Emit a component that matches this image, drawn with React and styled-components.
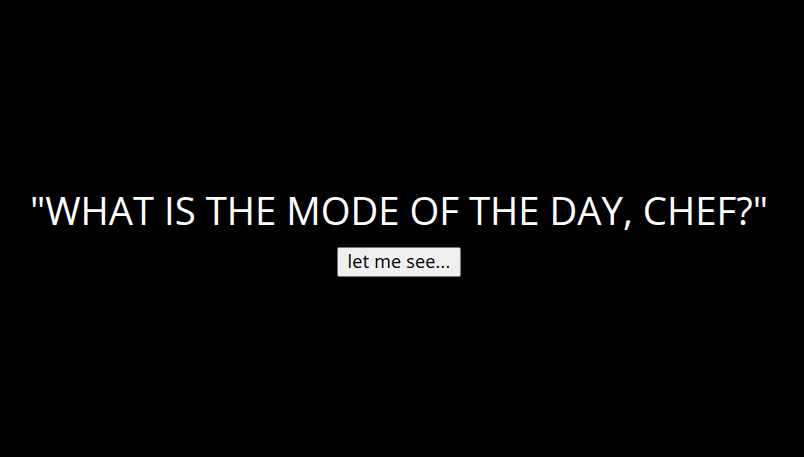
import React from "react";
import styled, { createGlobalStyle } from "styled-components";

const GlobalStyle = createGlobalStyle`
  html, body {
    margin: 0;
    padding: 0;
    background: #000;
  }
`;

const Page = styled.div`
  height: 100vh;
  display: flex;
  flex-direction: column;
  align-items: center;
  justify-content: center;
  padding: 4px 6px 0 0;
  box-sizing: border-box;
  background-color: #000;
  font-family: "Open Sans", "Noto Sans", sans-serif;
`;

const Title = styled.h1`
  margin: 0 0 12px;
  color: #fff;
  font-size: 38.3px;
  font-weight: 400;
  line-height: 50px;
  text-align: center;
`;

const SeeButton = styled.button`
  box-sizing: border-box;
  height: 30px;
  font-family: "Open Sans", "Noto Sans", sans-serif;
  font-size: 18px;
  line-height: 24px;
  letter-spacing: 0.2px;
  color: #000;
  background-color: #efefef;
  border: 1px solid #767676;
  border-radius: 2px;
  padding: 1px 10px 2px;
  cursor: pointer;
`;

const App = () => {
  return (
    <>
      <GlobalStyle />
      <Page>
        <Title>"WHAT IS THE MODE OF THE DAY, CHEF?"</Title>
        <SeeButton>let me see...</SeeButton>
      </Page>
    </>
  );
};

export default App;
